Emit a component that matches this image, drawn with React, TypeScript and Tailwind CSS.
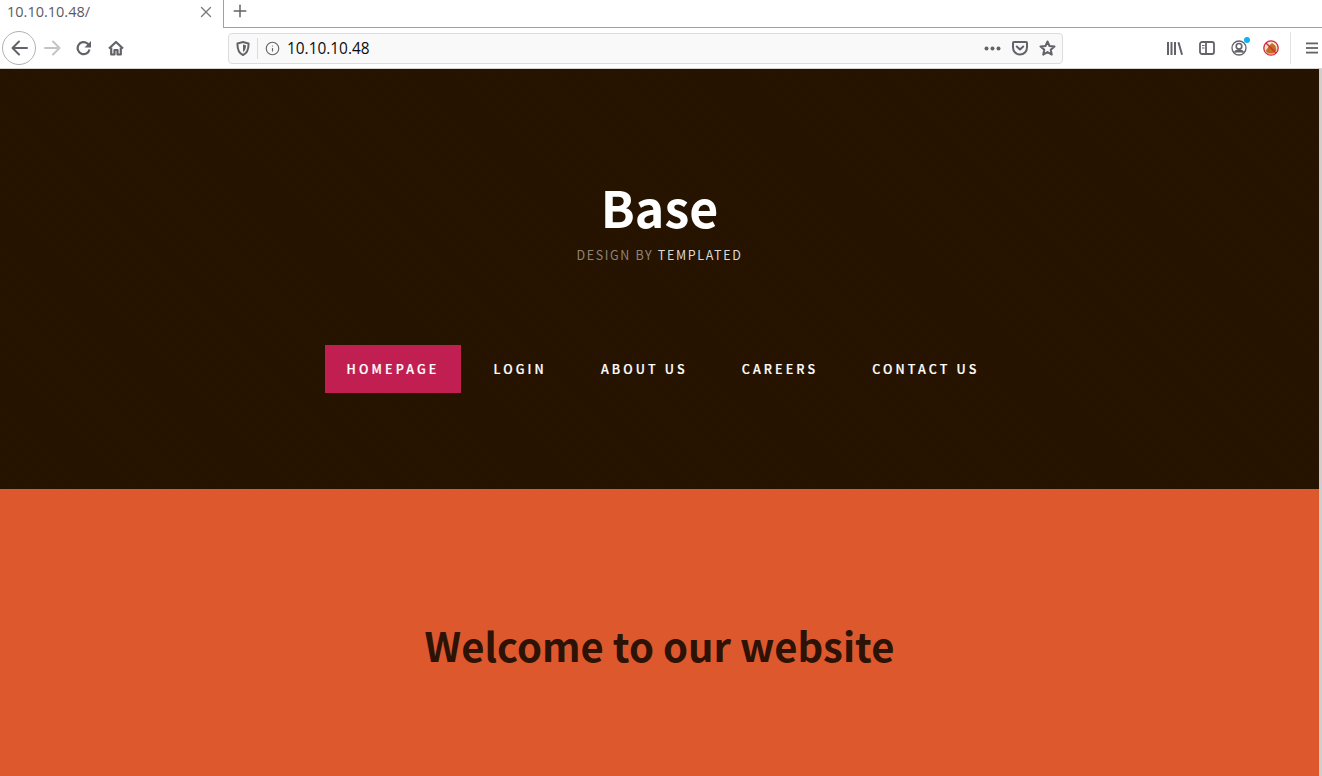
import { X, Plus, Info } from "lucide-react";

const iconColor = "#626268";

function Toolbar() {
  return (
    <div className="h-[41px] flex items-center bg-white border-b border-[#d4d4d4] font-['Open_Sans',sans-serif]">
      <div className="w-[228px] flex items-center pl-[2px] shrink-0">
        <div className="w-[34px] h-[34px] rounded-full border border-[#b1b1b3] flex items-center justify-center">
          <svg width="17" height="16" viewBox="0 0 17 16" fill="none" stroke={iconColor} strokeWidth="2" strokeLinecap="round" strokeLinejoin="round">
            <path d="M16 8H2M8 1.500 1.500 8 8 14.500" />
          </svg>
        </div>
        <svg width="17" height="16" viewBox="0 0 17 16" className="ml-[8px]" fill="none" stroke="#c4c4c6" strokeWidth="2" strokeLinecap="round" strokeLinejoin="round">
          <path d="M1 8h14M9 1.500 15.500 8 9 14.500" />
        </svg>
        <svg width="16" height="16" viewBox="0 0 16 16" className="ml-[15px]" fill="none">
          <path d="M13.500 9.500A6 6 0 1 1 11.500 3.500L13 5" stroke={iconColor} strokeWidth="2.200" />
          <path d="M15 1v6.500H8.500Z" fill={iconColor} />
        </svg>
        <svg width="16" height="16" viewBox="0 0 16 16" className="ml-[16px]" fill="none" stroke={iconColor} strokeWidth="2.200" strokeLinejoin="round">
          <path d="M1 8.500 8 2l7 6.500" />
          <path d="M3.200 7.500v7h3.300V10h3v4.500h3.300v-7" />
        </svg>
      </div>
      <div className="w-[835px] h-[31px] flex items-center rounded-[4px] border border-[#dcdcde] bg-[#f9f9fa] shrink-0">
        <div className="w-[29px] h-[21px] flex items-center justify-center border-r border-[#dcdcde]">
          <svg width="14" height="15" viewBox="0 0 14 15">
            <path d="M1.500 2.500 7 1l5.500 1.500c.2 5-1 9.500-5.500 11.500C2.500 12 1.300 7.500 1.500 2.500Z" fill="none" stroke={iconColor} strokeWidth="2" />
            <path d="M7 3.500 10 4.300C10 7.500 9 10 7 11Z" fill={iconColor} />
          </svg>
        </div>
        <Info size={15} color={iconColor} strokeWidth={1.800} className="ml-[7px]" />
        <span className="ml-[7px] pt-[1px] text-[15.400px] text-[#0c0c0d] leading-none">10.10.10.48</span>
        <div className="ml-auto flex items-center">
          <svg width="17" height="5" viewBox="0 0 17 5" fill={iconColor}>
            <circle cx="2.500" cy="2.500" r="2" />
            <circle cx="8.500" cy="2.500" r="2" />
            <circle cx="14.500" cy="2.500" r="2" />
          </svg>
          <svg width="16" height="15" viewBox="0 0 16 15" fill="none" className="ml-[11px]" stroke={iconColor} strokeWidth="2" strokeLinejoin="round" strokeLinecap="round">
            <path d="M2 1h12c.6 0 1 .4 1 1v4.500A7 7 0 0 1 1 6.500V2c0-.6.4-1 1-1Z" />
            <path d="m4.800 5.500 3.200 3 3.200-3" />
          </svg>
          <svg width="17" height="16" viewBox="0 0 17 16" className="ml-[11px] mr-[6px]" fill="none" stroke={iconColor} strokeWidth="2" strokeLinejoin="round">
            <path d="M8.500 1.500 10.500 6l5 .5-3.800 3.300 1.100 4.800-4.300-2.500-4.300 2.500 1.100-4.800L1.500 6.500l5-.5Z" />
          </svg>
        </div>
      </div>
      <div className="flex-1 flex items-center pl-[104px] h-full">
        <svg width="16" height="15" viewBox="0 0 16 15" fill={iconColor}>
          <rect x="0" y="1" width="2" height="13" />
          <rect x="3.500" y="1" width="2" height="13" />
          <rect x="7" y="1" width="2" height="13" />
          <path d="M10.500 1.500 12.400 1l3.600 12.500-1.900.5Z" />
        </svg>
        <svg width="16" height="14" viewBox="0 0 16 14" fill="none" className="ml-[16px]" stroke={iconColor} strokeWidth="1.800">
          <rect x="1" y="1" width="14" height="12" rx="2" />
          <path d="M7 1v12" />
          <path d="M3 4.500h2.500M3 7h2.500" strokeWidth="1.200" />
        </svg>
        <div className="relative ml-[16px] w-[16px] h-[16px]">
          <svg width="16" height="16" viewBox="0 0 16 16" fill="none" stroke={iconColor} strokeWidth="1.300">
            <circle cx="8" cy="8" r="7" />
            <circle cx="8" cy="6.300" r="2.800" fill="#fff" strokeWidth="1.600" />
            <path d="M3.500 12.500c1-3 8-3 9 0" fill={iconColor} />
          </svg>
          <span className="absolute -top-[3px] -right-[3px] w-[6px] h-[6px] rounded-full bg-[#0fb1f2]" />
        </div>
        <svg width="16" height="16" viewBox="0 0 16 16" className="ml-[16px]">
          <circle cx="8" cy="8" r="7.200" fill="#f4e3cf" stroke="#d7263d" strokeWidth="1.300" />
          <path d="M2.500 11 6 6l3-3 3.500 3 1 4.500-3 3H5Z" fill="#c1701f" />
          <path d="M3 3l10 10" stroke="#d7263d" strokeWidth="1.300" />
        </svg>
        <div className="ml-[11px] w-px h-[32px] bg-[#e1e1e2]" />
        <svg width="12" height="12" viewBox="0 0 12 12" fill={iconColor} className="ml-[15px]">
          <rect y="0.500" width="12" height="1.800" />
          <rect y="5.100" width="12" height="1.800" />
          <rect y="9.700" width="12" height="1.800" />
        </svg>
      </div>
    </div>
  );
}

function BrowserChrome() {
  return (
    <div className="bg-white">
      <div className="h-[28px] flex border-b border-[#a0a0a0]">
        <div className="w-[224px] h-[28px] bg-white border-r border-[#a0a0a0] flex items-center pb-[3px] pl-[7px] pr-[8px] font-['Open_Sans',sans-serif]">
          <span className="text-[14.500px] text-[#5b5b66] leading-none">10.10.10.48/</span>
          <X size={18} color="#7a7a80" strokeWidth={1.800} className="ml-auto mb-[1px]" />
        </div>
        <div className="pl-[6px] pb-[5px] flex items-center">
          <Plus size={20} color={iconColor} strokeWidth={1.800} />
        </div>
      </div>
      <Toolbar />
    </div>
  );
}

const navItems = ["HOMEPAGE", "LOGIN", "ABOUT US", "CAREERS", "CONTACT US"];

export default function App() {
  return (
    <div className="h-[776px] overflow-hidden bg-white">
      <BrowserChrome />
      <div className="flex">
        <main className="flex-1 font-['Noto_Sans_CJK_SC','Noto_Sans',sans-serif]">
          <section className="h-[420px] bg-[#261300] bg-[repeating-linear-gradient(45deg,#271401_0,#271401_1px,#251300_1px,#251300_3px)] flex flex-col items-center">
            <h1 className="mt-[104px] text-[50px] leading-[66px] font-bold text-white">Base</h1>
            <p className="mt-[6px] text-[12.500px] leading-[20px] tracking-[0.13em] text-[#8f8477]">
              DESIGN BY <span className="text-[#ddd9d4]">TEMPLATED</span>
            </p>
            <nav className="mt-[80px] flex items-center ml-[17px]">
              {navItems.map((item, i) => (
                <a
                  key={item}
                  className={
                    i === 0
                      ? "h-[48px] px-[22px] flex items-center bg-[#c11f51] text-white text-[12.500px] font-medium tracking-[0.25em] mr-[10px] [-webkit-text-stroke:0.2px_white]"
                      : "h-[48px] px-[22px] flex items-center text-white text-[12.500px] font-medium tracking-[0.25em] mr-[10px] [-webkit-text-stroke:0.2px_white]"
                  }
                >
                  {item}
                </a>
              ))}
            </nav>
          </section>
          <section className="h-[287px] bg-[#de582e] flex justify-center">
            <h2 className="mt-[128px] text-[40px] leading-[56px] font-bold text-[#2d1206]">Welcome to our website</h2>
          </section>
        </main>
        <div className="w-[3px] bg-[#d0cfce]" />
      </div>
    </div>
  );
}
